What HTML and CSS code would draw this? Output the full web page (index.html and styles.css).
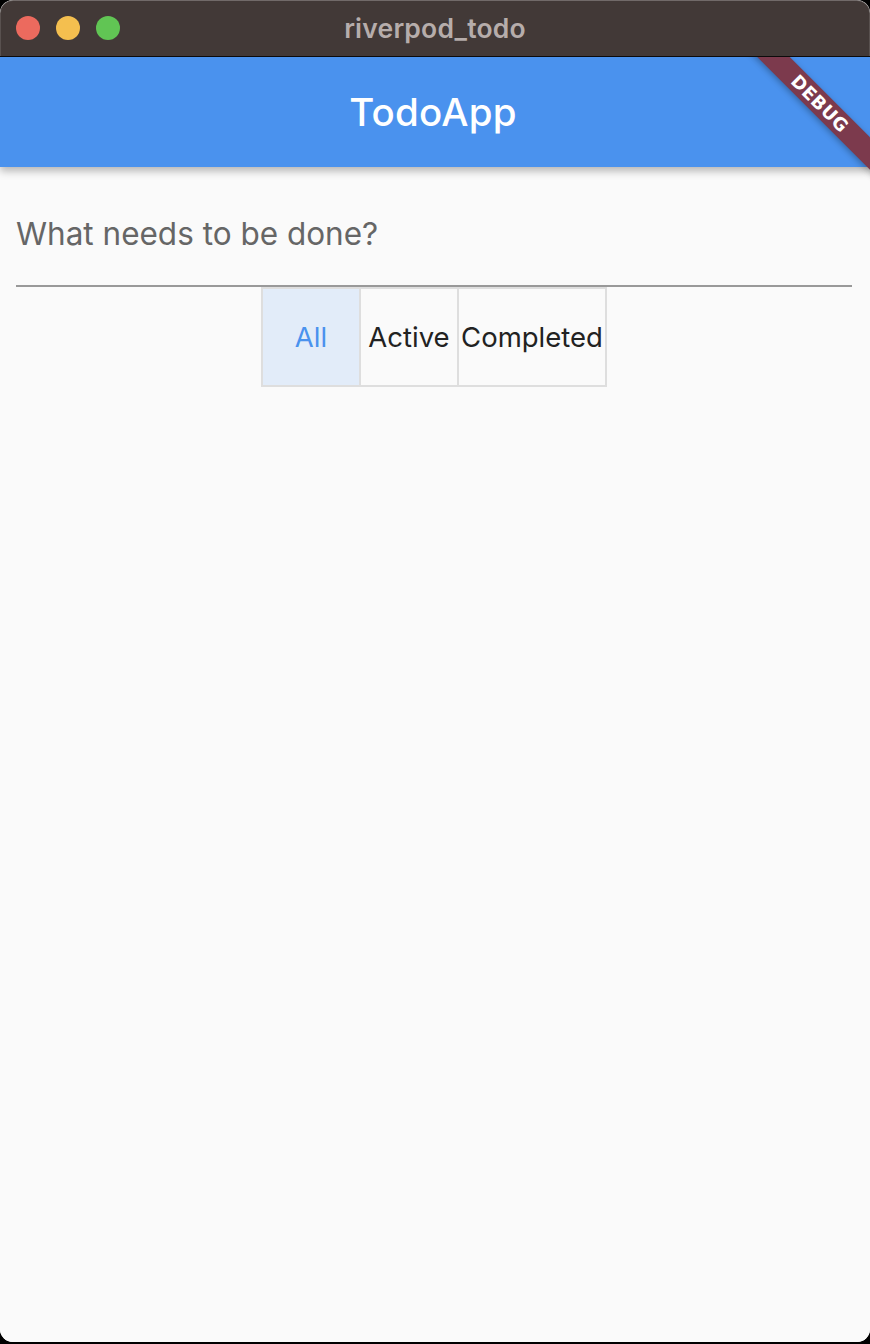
FILE: index.html
```html
<!DOCTYPE html>
<html>
<head>
<meta charset="utf-8">
<link rel="stylesheet" href="styles.css">
</head>
<body>
<div class="window">
  <div class="titlebar">
    <div class="lights">
      <span class="light red"></span>
      <span class="light yellow"></span>
      <span class="light green"></span>
    </div>
    <div class="wintitle">riverpod_todo</div>
  </div>
  <div class="app">
    <header class="appbar">
      <h1 class="apptitle">TodoApp</h1>
    </header>
    <main class="content">
      <div class="field">
        <input class="input" type="text" placeholder="What needs to be done?">
      </div>
      <div class="toggles">
        <button class="toggle selected">All</button>
        <button class="toggle">Active</button>
        <button class="toggle wide">Completed</button>
      </div>
    </main>
    <div class="banner">DEBUG</div>
  </div>
</div>
</body>
</html>
```

FILE: styles.css
```css
html, body {
  margin: 0;
  padding: 0;
  background: #000;
  width: 870px;
  height: 1344px;
  overflow: hidden;
}
body {
  font-family: Inter, "Noto Sans", sans-serif;
}
.window {
  width: 870px;
  height: 1342px;
  border-radius: 13px;
  overflow: hidden;
  display: flex;
  flex-direction: column;
  background: #fafafa;
  box-shadow: inset 0 0 0 1px rgba(255,255,255,0.12);
}
.titlebar {
  height: 56px;
  flex: none;
  background: #423937;
  border-bottom: 1px solid #0d0b0b;
  display: flex;
  align-items: center;
  justify-content: center;
  position: relative;
  box-shadow: inset 0 1px 0 rgba(255,255,255,0.25), inset 1px 0 0 rgba(255,255,255,0.12), inset -1px 0 0 rgba(255,255,255,0.12);
  border-radius: 13px 13px 0 0;
}
.lights {
  position: absolute;
  left: 16px;
  top: 16px;
  display: flex;
  gap: 16px;
}
.light {
  width: 24px;
  height: 24px;
  border-radius: 50%;
  display: block;
}
.red { background: #ec6a5e; }
.yellow { background: #f4bf4f; }
.green { background: #61c554; }
.wintitle {
  color: #b6adab;
  font-size: 26.5px;
  font-weight: 600;
  letter-spacing: 0.2px;
  margin-left: 0;
}
.app {
  flex: 1;
  position: relative;
  overflow: hidden;
  display: flex;
  flex-direction: column;
  background: #fafafa;
}
.appbar {
  height: 110px;
  flex: none;
  background: #4a92ee;
  display: flex;
  align-items: center;
  justify-content: center;
  box-shadow: 0 4px 8px rgba(0,0,0,0.28);
  position: relative;
  z-index: 1;
}
.apptitle {
  margin: 0;
  color: #fff;
  font-size: 38.5px;
  font-weight: 500;
  letter-spacing: 0.2px;
  padding-top: 0;
  margin-left: -4px;
}
.content {
  flex: 1;
  display: flex;
  flex-direction: column;
  align-items: center;
}
.field {
  align-self: stretch;
  margin: 0 18px 0 16px;
  padding-top: 46px;
  border-bottom: 2px solid #999;
  height: 72px;
}
.input {
  width: 100%;
  border: none;
  outline: none;
  background: transparent;
  font-family: Inter, "Noto Sans", sans-serif;
  font-size: 31.5px;
  color: #222;
  padding: 0;
  height: 40px;
}
.input::placeholder {
  color: #666;
}
.toggles {
  display: flex;
  border: 2px solid #dedede;
  margin-top: 0;
  margin-left: -2px;
}
.toggle {
  font-family: Inter, "Noto Sans", sans-serif;
  font-size: 27.5px;
  color: #222;
  background: transparent;
  border: none;
  border-left: 2px solid #dedede;
  width: 98px;
  height: 96px;
  padding: 0;
  display: flex;
  align-items: center;
  justify-content: center;
}
.toggle:first-child {
  border-left: none;
  width: 96px;
}
.toggle.wide {
  width: 148px;
}
.toggle.selected {
  background: #e2ecf9;
  color: #4a92ee;
}
.banner {
  position: absolute;
  left: 720px;
  top: 35px;
  width: 200px;
  height: 23px;
  background: #7c3a4d;
  color: #fff;
  font-family: "DejaVu Sans", sans-serif;
  font-weight: 700;
  font-size: 18px;
  letter-spacing: 0.5px;
  line-height: 23px;
  text-align: center;
  transform: rotate(45deg);
  box-shadow: 0 2px 6px rgba(0,0,0,0.3);
  z-index: 2;
}
```
